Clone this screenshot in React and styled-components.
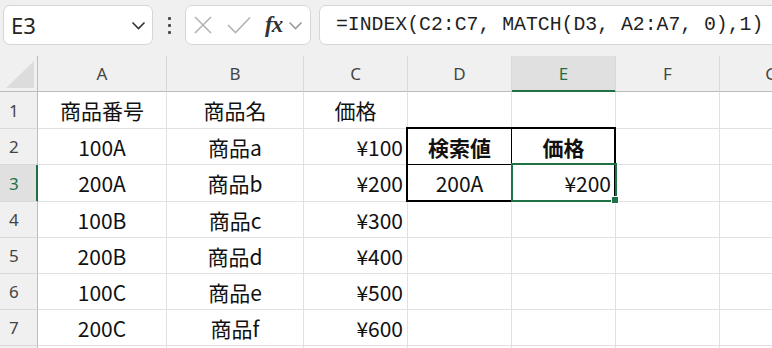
import styled, { createGlobalStyle, css } from "styled-components";

const GlobalStyle = createGlobalStyle`
  html, body {
    margin: 0;
    padding: 0;
    background: #ffffff;
    overflow: hidden;
  }
  body {
    font-family: "Noto Sans", "Noto Sans CJK JP", sans-serif;
  }
`;

const GREEN = "#1e7145";

const Window = styled.div`
  width: 772px;
  height: 348px;
  overflow: hidden;
  background: #ffffff;
`;

// formula bar
const FormulaBar = styled.div`
  height: 56px;
  box-sizing: border-box;
  padding: 5px 0 11px 3px;
  display: flex;
  background: #f0f0f0;
`;

const Box = styled.div`
  box-sizing: border-box;
  flex-shrink: 0;
  height: 40px;
  background: #ffffff;
  border: 1px solid #d6d6d6;
  border-radius: 7px;
  display: flex;
  align-items: center;
`;

const NameBox = styled(Box)`
  width: 150px;
  padding: 0 6px 0 7px;
  justify-content: space-between;
  font-size: 22px;
  color: #262626;
`;

const Grip = styled.div`
  flex-shrink: 0;
  width: 32px;
  display: flex;
  flex-direction: column;
  align-items: center;
  justify-content: center;
  gap: 4px;
  span {
    width: 3px;
    height: 3px;
    border-radius: 1px;
    background: #4a4a4a;
  }
`;

const FuncBox = styled(Box)`
  width: 126px;
  padding-left: 8px;
`;

const IconSlot = styled.div`
  display: flex;
  align-items: center;
  margin-right: ${(p) => p.$gap || 0}px;
`;

const Fx = styled.span`
  font-family: "Liberation Serif", serif;
  font-style: italic;
  font-weight: 700;
  font-size: 23px;
  color: #333333;
  margin-right: 6px;
  letter-spacing: -1px;
`;

const FormulaBox = styled(Box)`
  width: 480px;
  margin-left: 8px;
  padding-left: 16px;
  font-family: "Liberation Mono", "DejaVu Sans Mono", monospace;
  font-size: 19.8px;
  color: #1f1f1f;
  white-space: nowrap;
`;

// sheet
const Sheet = styled.div`
  position: relative;
  width: 830px;
  display: grid;
  grid-template-columns: 38px 129px 137px 104px 104px 104px 104px 104px;
  grid-template-rows: 36px 37px 36px 37px 36px 36px 36px 36px 20px;
`;

const headBase = css`
  box-sizing: border-box;
  background: #f0f0f0;
  font-family: "Noto Sans", sans-serif;
  font-size: 17px;
  color: #444444;
  display: flex;
  align-items: center;
`;

const Corner = styled.div`
  ${headBase};
  border-right: 1px solid #bdbdbd;
  border-bottom: 1px solid #bdbdbd;
  align-items: flex-end;
  justify-content: flex-end;
  padding: 0 3px 3px 0;
`;

const ColHead = styled.div`
  ${headBase};
  justify-content: center;
  border-right: 1px solid #d9d9d9;
  border-bottom: 1px solid #bdbdbd;
  ${(p) =>
    p.$active &&
    css`
      background: #e0e0e0;
      color: ${GREEN};
      border-bottom-color: ${GREEN};
      box-shadow: inset 0 -1px 0 ${GREEN};
    `}
`;

const RowHead = styled.div`
  ${headBase};
  padding-left: 9px;
  border-right: 1px solid #bdbdbd;
  border-bottom: 1px solid #d9d9d9;
  ${(p) =>
    p.$active &&
    css`
      background: #e0e0e0;
      color: ${GREEN};
      border-right-color: ${GREEN};
      box-shadow: inset -1px 0 0 ${GREEN};
    `}
`;

const Cell = styled.div`
  box-sizing: border-box;
  display: flex;
  align-items: center;
  justify-content: ${(p) =>
    p.$align === "right" ? "flex-end" : p.$align === "left" ? "flex-start" : "center"};
  padding: 0 4px 0 4px;
  border-right: 1px solid ${(p) => (p.$inkRight ? "#000000" : "#e1e1e1")};
  border-bottom: 1px solid ${(p) => (p.$inkBottom ? "#000000" : "#e1e1e1")};
  font-family: "Noto Sans CJK JP", "Noto Sans", sans-serif;
  font-size: 21px;
  font-weight: ${(p) => (p.$bold ? 700 : 400)};
  color: #111111;
  white-space: nowrap;
`;

const RangeBorder = styled.div`
  position: absolute;
  left: 406px;
  top: 71px;
  width: 210px;
  height: 75px;
  box-sizing: border-box;
  border: 2px solid #000000;
  pointer-events: none;
`;

const Selection = styled.div`
  position: absolute;
  left: 511px;
  top: 107px;
  width: 106px;
  height: 39px;
  box-sizing: border-box;
  border: 2px solid ${GREEN};
  pointer-events: none;
`;

const FillHandle = styled.div`
  position: absolute;
  left: 611px;
  top: 140px;
  width: 8px;
  height: 8px;
  box-sizing: border-box;
  background: ${GREEN};
  border: 1px solid #ffffff;
`;

const Chevron = ({ color = "#333", w = 15 }) => (
  <svg width={w} height="9" viewBox="0 0 15 9">
    <polyline points="1.5,1.5 7.5,7.5 13.5,1.5" fill="none" stroke={color} strokeWidth="1.6" />
  </svg>
);

const columns = ["A", "B", "C", "D", "E", "F", "G"];

const rows = [
  ["商品番号", "商品名", "価格", "", ""],
  ["100A", "商品a", "¥100", "検索値", "価格"],
  ["200A", "商品b", "¥200", "200A", "¥200"],
  ["100B", "商品c", "¥300"],
  ["200B", "商品d", "¥400"],
  ["100C", "商品e", "¥500"],
  ["200C", "商品f", "¥600"],
];

function cellProps(r, c) {
  const props = {};
  if (r > 0 && c === 2) props.$align = "right";
  if (r === 2 && c === 4) props.$align = "right";
  if (r === 1 && (c === 3 || c === 4)) props.$bold = true;
  if ((r === 1 || r === 2) && c === 3) props.$inkRight = true;
  if (r === 1 && (c === 3 || c === 4)) props.$inkBottom = true;
  return props;
}

export default function App() {
  return (
    <Window>
      <GlobalStyle />
      <FormulaBar>
        <NameBox>
          <span>E3</span>
          <Chevron color="#333" />
        </NameBox>
        <Grip>
          <span />
          <span />
          <span />
        </Grip>
        <FuncBox>
          <IconSlot $gap={15}>
            <svg width="18" height="18" viewBox="0 0 18 18">
              <path d="M1 1 L17 17 M17 1 L1 17" stroke="#b3b3b3" strokeWidth="1.6" fill="none" />
            </svg>
          </IconSlot>
          <IconSlot $gap={14}>
            <svg width="24" height="18" viewBox="0 0 24 18">
              <polyline points="1,9 8.5,16.5 23,1.5" stroke="#b3b3b3" strokeWidth="1.6" fill="none" />
            </svg>
          </IconSlot>
          <Fx>fx</Fx>
          <Chevron color="#9a9a9a" />
        </FuncBox>
        <FormulaBox>=INDEX(C2:C7, MATCH(D3, A2:A7, 0),1)</FormulaBox>
      </FormulaBar>

      <Sheet>
        <Corner>
          <svg width="28" height="27" viewBox="0 0 28 27">
            <polygon points="28,0 28,27 0,27" fill="#dcdcdc" />
          </svg>
        </Corner>
        {columns.map((c) => (
          <ColHead key={c} $active={c === "E"}>
            {c}
          </ColHead>
        ))}
        {rows.map((row, r) => [
          <RowHead key={`h${r}`} $active={r === 2}>
            {r + 1}
          </RowHead>,
          ...columns.map((_, c) => (
            <Cell key={`${r}-${c}`} {...cellProps(r, c)}>
              {row[c] || ""}
            </Cell>
          )),
        ])}
        {/* rows below the visible area: only their top edge shows */}
        <RowHead />
        {columns.map((c) => (
          <Cell key={`tail-${c}`} />
        ))}
        <RangeBorder />
        <Selection />
        <FillHandle />
      </Sheet>
    </Window>
  );
}
